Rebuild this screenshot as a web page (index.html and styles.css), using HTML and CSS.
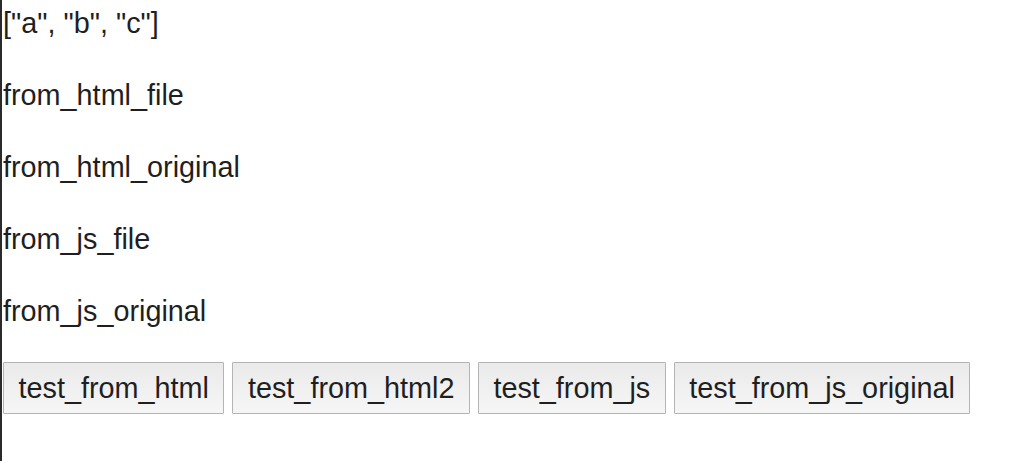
FILE: index.html
```html
<!DOCTYPE html>
<html>
<head>
<meta charset="utf-8">
<link rel="stylesheet" href="styles.css">
</head>
<body>
<div class="page">
  <p class="line">["a", "b", "c"]</p>
  <p class="line">from_html_file</p>
  <p class="line">from_html_original</p>
  <p class="line">from_js_file</p>
  <p class="line">from_js_original</p>
  <div class="buttons">
    <button class="btn">test_from_html</button>
    <button class="btn">test_from_html2</button>
    <button class="btn">test_from_js</button>
    <button class="btn">test_from_js_original</button>
  </div>
</div>
</body>
</html>
```
FILE: styles.css
```css
html, body {
  margin: 0;
  padding: 0;
  background: #ffffff;
}
body {
  font-family: "Liberation Sans", Arial, sans-serif;
  font-size: 28.8px;
  color: #1f1f1f;
}
.page {
  border-left: 2px solid #2a2a2a;
  padding: 1.5px 0 0 1px;
  min-height: 461px;
  box-sizing: border-box;
}
.line {
  margin: 0 0 28.8px 0;
  line-height: 43.2px;
}
.buttons {
  display: flex;
  gap: 8px;
  align-items: flex-start;
}
.btn {
  font-family: "Liberation Sans", Arial, sans-serif;
  font-size: 28.8px;
  line-height: 33px;
  color: #1f1f1f;
  padding: 9px 14.5px 8px 14.5px;
  border: 1px solid #b4b4b4;
  border-radius: 1px;
  background: linear-gradient(#eaeaea, #f6f6f6);
  margin: 0;
}
```
